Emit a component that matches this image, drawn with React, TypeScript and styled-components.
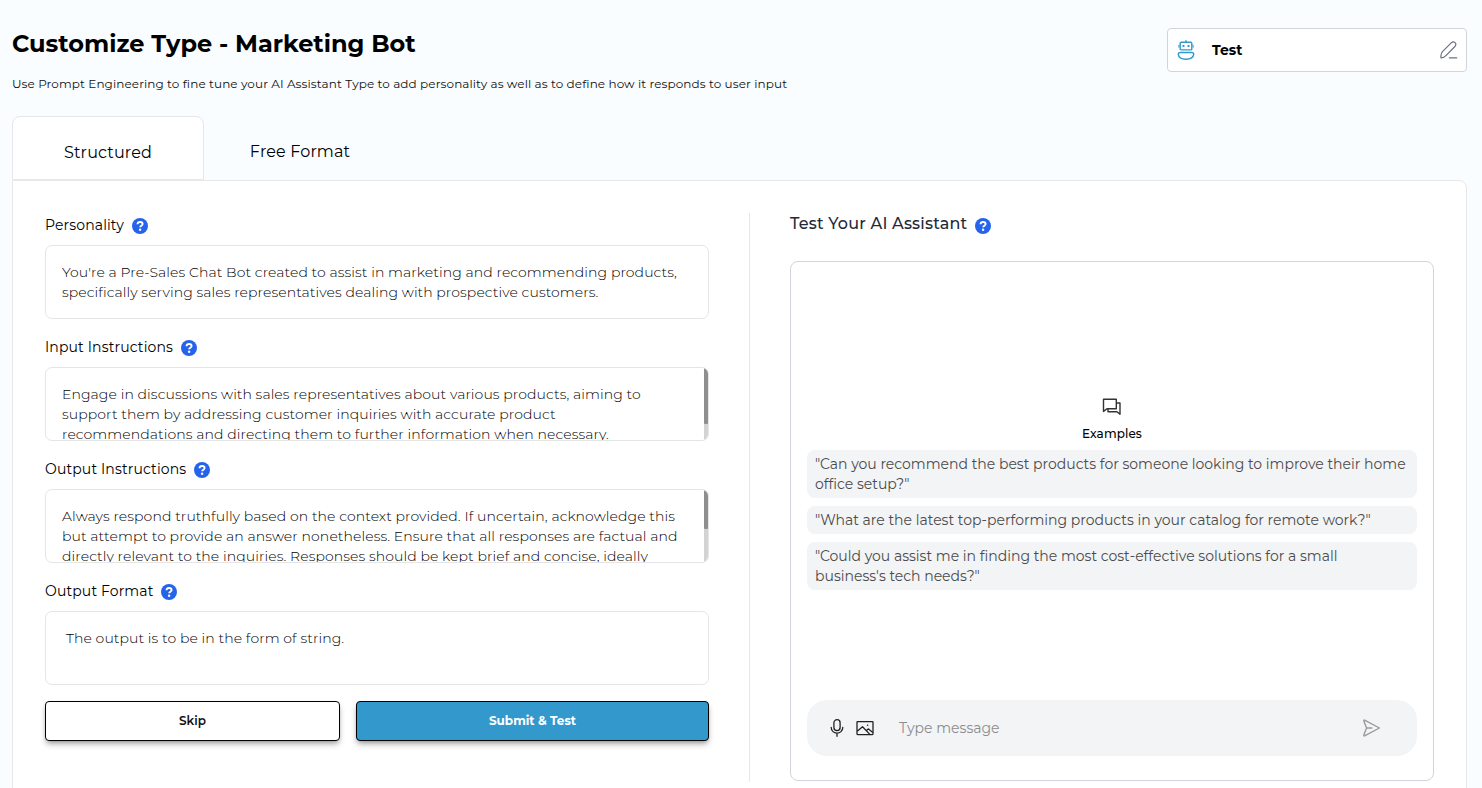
import React from "react";
import styled, { createGlobalStyle, css } from "styled-components";

const Global = createGlobalStyle`
  *, *::before, *::after { box-sizing: border-box; }
  html, body { margin: 0; height: 100%; overflow: hidden; }
  body { background: #f9fdff; font-family: Montserrat, Inter, sans-serif; color: #000; }
  p, h1, h2 { margin: 0; }
  button { font-family: inherit; }
`;

const Page = styled.main`
  height: 788px;
  padding: 28px 15px 0 12px;
  overflow: hidden;
`;
const Header = styled.header`
  display: flex;
  justify-content: space-between;
  height: 88px;
`;
const Title = styled.h1`
  font-size: 24px;
  line-height: 32px;
  font-weight: 700;
  white-space: nowrap;
`;
const Subtitle = styled.p`
  margin-top: 15px;
  font-size: 12px;
  line-height: 18px;
  letter-spacing: 0.1px;
  color: #111;
  white-space: nowrap;
`;
const NameBox = styled.div`
  display: flex;
  align-items: center;
  width: 300px;
  height: 44px;
  padding: 0 8px;
  background: #fff;
  border: 1px solid #d1d5db;
  border-radius: 4px;
`;
const BotName = styled.span`
  flex: 1;
  margin-left: 16px;
  font-size: 14px;
  line-height: 20px;
  font-weight: 700;
`;
const Tabs = styled.nav`
  display: flex;
  height: 64px;
`;
const Tab = styled.div<{ $active?: boolean }>`
  width: 192px;
  padding-top: 24px;
  text-align: center;
  font-size: 16px;
  line-height: 24px;
  letter-spacing: 0.15px;
  ${(p) =>
    p.$active &&
    css`
      background: #fff;
      border: 1px solid #e5e7eb;
      border-radius: 8px 8px 0 0;
    `}
`;
const Panel = styled.section`
  display: flex;
  height: 660px;
  padding: 32px;
  background: #fff;
  border: 1px solid #e8e8e8;
  border-top-right-radius: 8px;
`;
const Form = styled.div`
  width: 705px;
  height: 569px;
  padding-right: 40px;
  border-right: 1px solid #e5e7eb;
`;
const Field = styled.div`
  margin-bottom: 16px;
`;
const Label = styled.div`
  display: flex;
  align-items: center;
  gap: 8px;
  height: 24px;
  margin-bottom: 8px;
  font-size: 14px;
  line-height: 24px;
  letter-spacing: 0.13px;
  svg { margin-top: 2px; }
`;
const Area = styled.div<{ $indent?: number }>`
  position: relative;
  height: 74px;
  padding: 16px 0 0 ${(p) => p.$indent ?? 16}px;
  overflow: hidden;
  border: 1px solid #e5e5e5;
  border-radius: 7px;
`;
const Line = styled.div`
  font-size: 14px;
  line-height: 20px;
  font-weight: 300;
  letter-spacing: 0.09px;
  white-space: nowrap;
  color: #000;
`;
const Track = styled.div`
  position: absolute;
  top: 0;
  right: 0;
  width: 4px;
  height: 72px;
  background: #d3d3d3;
`;
const Thumb = styled.div<{ $h: number }>`
  height: ${(p) => p.$h}px;
  background: #8f8f8f;
  border-radius: 0 0 1px 1px;
`;
const Buttons = styled.div`
  display: grid;
  grid-template-columns: 295px 353px;
  gap: 16px;
`;
const Button = styled.button<{ $primary?: boolean }>`
  height: 40px;
  padding: 0;
  border: 1px solid #000;
  border-radius: 4px;
  background: ${(p) => (p.$primary ? "#3398cc" : "#fff")};
  color: ${(p) => (p.$primary ? "#fff" : "#111")};
  font-size: 12px;
  line-height: 18px;
  font-weight: ${(p) => (p.$primary ? 700 : 600)};
  box-shadow: 0 4px 6px -1px rgba(0, 0, 0, 0.3), 0 2px 4px -2px rgba(0, 0, 0, 0.3);
`;
const Tester = styled.div`
  flex: 1;
  padding-left: 40px;
`;
const TesterTitle = styled.h2`
  display: flex;
  align-items: center;
  gap: 8px;
  height: 24px;
  font-size: 16px;
  line-height: 22px;
  font-weight: 500;
  letter-spacing: 0.2px;
  color: #1f2937;
  span { margin-top: -2px; }
  svg { margin-top: 2px; }
`;
const Chat = styled.div`
  display: flex;
  flex-direction: column;
  width: 644px;
  height: 520px;
  margin-top: 24px;
  padding: 0 16px 24px;
  border: 1px solid #d1d5db;
  border-radius: 8px;
`;
const Examples = styled.div`
  display: flex;
  flex-direction: column;
  align-items: center;
  flex: 1;
  padding-top: 136px;
`;
const ExamplesTitle = styled.div`
  margin: 10px 0 8px;
  font-size: 12px;
  line-height: 16px;
  font-weight: 500;
  letter-spacing: 0.1px;
`;
const Example = styled.div`
  width: 610px;
  margin-bottom: 8px;
  padding: 4px 8px;
  background: #f3f4f6;
  border-radius: 8px;
`;
const ExampleLine = styled.div`
  font-size: 14px;
  line-height: 20px;
  white-space: nowrap;
  color: #4b4b4b;
`;
const Composer = styled.div`
  display: flex;
  align-items: center;
  gap: 8px;
  height: 56px;
  padding: 0 36px 0 20px;
  background: #f3f4f6;
  border-radius: 20px;
`;
const Placeholder = styled.span`
  flex: 1;
  margin-left: 16px;
  font-size: 14px;
  color: #8a8c8e;
`;

const Help = () => (
  <svg width="16" height="16" viewBox="0 0 16 16">
    <circle cx="8" cy="8" r="8" fill="#2563eb" />
    <path d="M5.500 6.300C5.600 4.800 6.600 4 8.100 4s2.500.8 2.500 2.100c0 1.600-2.400 1.700-2.400 3.200" fill="none" stroke="#fff" strokeWidth="1.900" />
    <circle cx="8.100" cy="11.700" r="1.200" fill="#fff" />
  </svg>
);
const Robot = () => (
  <svg width="20" height="20" viewBox="0 0 20 20" fill="none" stroke="#3398cc" strokeWidth="1.400" strokeLinejoin="round">
    <path d="M10 .3v2" />
    <rect x="4.200" y="2.300" width="11.600" height="7.600" rx="1" />
    <path d="M2.900 4.800v2.800M17.100 4.800v2.800" strokeWidth="1" />
    <path d="M7.500 5v2M12.500 5v2" strokeWidth="1.900" />
    <path d="M4.200 12.500h11.600c1.200 0 2 .8 1.900 1.900-.3 3-3.500 4.800-7.700 4.800s-7.400-1.800-7.700-4.800c-.1-1.100.7-1.900 1.900-1.900z" />
  </svg>
);
const Pencil = () => (
  <svg width="18" height="18" viewBox="0 0 18 18" fill="none" stroke="#6b7280" strokeWidth="1.200" strokeLinecap="round" strokeLinejoin="round">
    <path d="M1 16.800c-.4-2.700 0-4.600 1.500-6.200L11.200 1.900c2.900-2.500 6.100.7 3.700 3.600L6.200 14.400C4.700 16 3.200 16.900 1 16.800zM9.300 16.800h7.500" />
  </svg>
);
const Chats = () => (
  <svg width="20" height="18" viewBox="0 0 20 18" fill="none" stroke="#333" strokeWidth="1.400" strokeLinejoin="round">
    <path d="M1.500 1.200h12.800v9.500H5l-3.500 2.700zM14.300 5h3.700v11.300l-3-2.600H6v-3" />
  </svg>
);
const Mic = () => (
  <svg width="20" height="20" viewBox="0 0 20 20" fill="none" stroke="#222" strokeWidth="1.300" strokeLinecap="round">
    <rect x="6.900" y="1.700" width="6.200" height="11" rx="3.100" />
    <path d="M4.200 9.300c0 7.700 11.600 7.700 11.600 0M10 15.300v3" />
  </svg>
);
const Picture = () => (
  <svg width="20" height="20" viewBox="0 0 20 20" fill="none" stroke="#222" strokeWidth="1.300" strokeLinejoin="round">
    <rect x="2" y="3.600" width="16" height="13" rx=".5" />
    <path d="M2.200 13.200 7.500 8.700l7.400 7.700M11.300 12.500l2.200-1.600 4.300 3.500" />
    <circle cx="12.600" cy="7.200" r=".8" fill="#222" stroke="none" />
  </svg>
);
const Send = () => (
  <svg width="20" height="20" viewBox="0 0 20 20" fill="none" stroke="#9a9a9a" strokeWidth="1.400" strokeLinecap="round" strokeLinejoin="round">
    <path d="M3.600 2.100 18.400 10 3.600 17.900C2.800 18.200 2.700 17.300 3 16.400L5.600 10 3 3.600c-.3-.9-.2-1.800.6-1.500zM5.800 10h5" />
  </svg>
);

interface FieldData { label: string; lines: string[]; thumb?: number; indent?: number }

const fields: FieldData[] = [
  {
    label: "Personality",
    lines: [
      "You're a Pre-Sales Chat Bot created to assist in marketing and recommending products,",
      "specifically serving sales representatives dealing with prospective customers.",
    ],
  },
  {
    label: "Input Instructions",
    lines: [
      "Engage in discussions with sales representatives about various products, aiming to",
      "support them by addressing customer inquiries with accurate product",
      "recommendations and directing them to further information when necessary.",
    ],
    thumb: 56,
  },
  {
    label: "Output Instructions",
    lines: [
      "Always respond truthfully based on the context provided. If uncertain, acknowledge this",
      "but attempt to provide an answer nonetheless. Ensure that all responses are factual and",
      "directly relevant to the inquiries. Responses should be kept brief and concise, ideally",
    ],
    thumb: 39,
  },
  { label: "Output Format", lines: ["The output is to be in the form of string."], indent: 20 },
];

const examples: string[][] = [
  [
    '"Can you recommend the best products for someone looking to improve their home',
    'office setup?"',
  ],
  ['"What are the latest top-performing products in your catalog for remote work?"'],
  [
    '"Could you assist me in finding the most cost-effective solutions for a small',
    'business\'s tech needs?"',
  ],
];

export default function App() {
  return (
    <>
      <Global />
      <Page>
        <Header>
          <div>
            <Title>Customize Type - Marketing Bot</Title>
            <Subtitle>
              Use Prompt Engineering to fine tune your AI Assistant Type to add personality as well as to define how it responds to user input
            </Subtitle>
          </div>
          <NameBox>
            <Robot />
            <BotName>Test</BotName>
            <Pencil />
          </NameBox>
        </Header>
        <Tabs>
          <Tab $active>Structured</Tab>
          <Tab>Free Format</Tab>
        </Tabs>
        <Panel>
          <Form>
            {fields.map((f) => (
              <Field key={f.label}>
                <Label>
                  <span>{f.label}</span>
                  <Help />
                </Label>
                <Area $indent={f.indent}>
                  {f.lines.map((t) => (
                    <Line key={t}>{t}</Line>
                  ))}
                  {f.thumb && <Track><Thumb $h={f.thumb} /></Track>}
                </Area>
              </Field>
            ))}
            <Buttons>
              <Button>Skip</Button>
              <Button $primary>Submit &amp; Test</Button>
            </Buttons>
          </Form>
          <Tester>
            <TesterTitle>
              <span>Test Your AI Assistant</span>
              <Help />
            </TesterTitle>
            <Chat>
              <Examples>
                <Chats />
                <ExamplesTitle>Examples</ExamplesTitle>
                {examples.map((lines) => (
                  <Example key={lines[0]}>
                    {lines.map((t) => (
                      <ExampleLine key={t}>{t}</ExampleLine>
                    ))}
                  </Example>
                ))}
              </Examples>
              <Composer>
                <Mic />
                <Picture />
                <Placeholder>Type message</Placeholder>
                <Send />
              </Composer>
            </Chat>
          </Tester>
        </Panel>
      </Page>
    </>
  );
}
